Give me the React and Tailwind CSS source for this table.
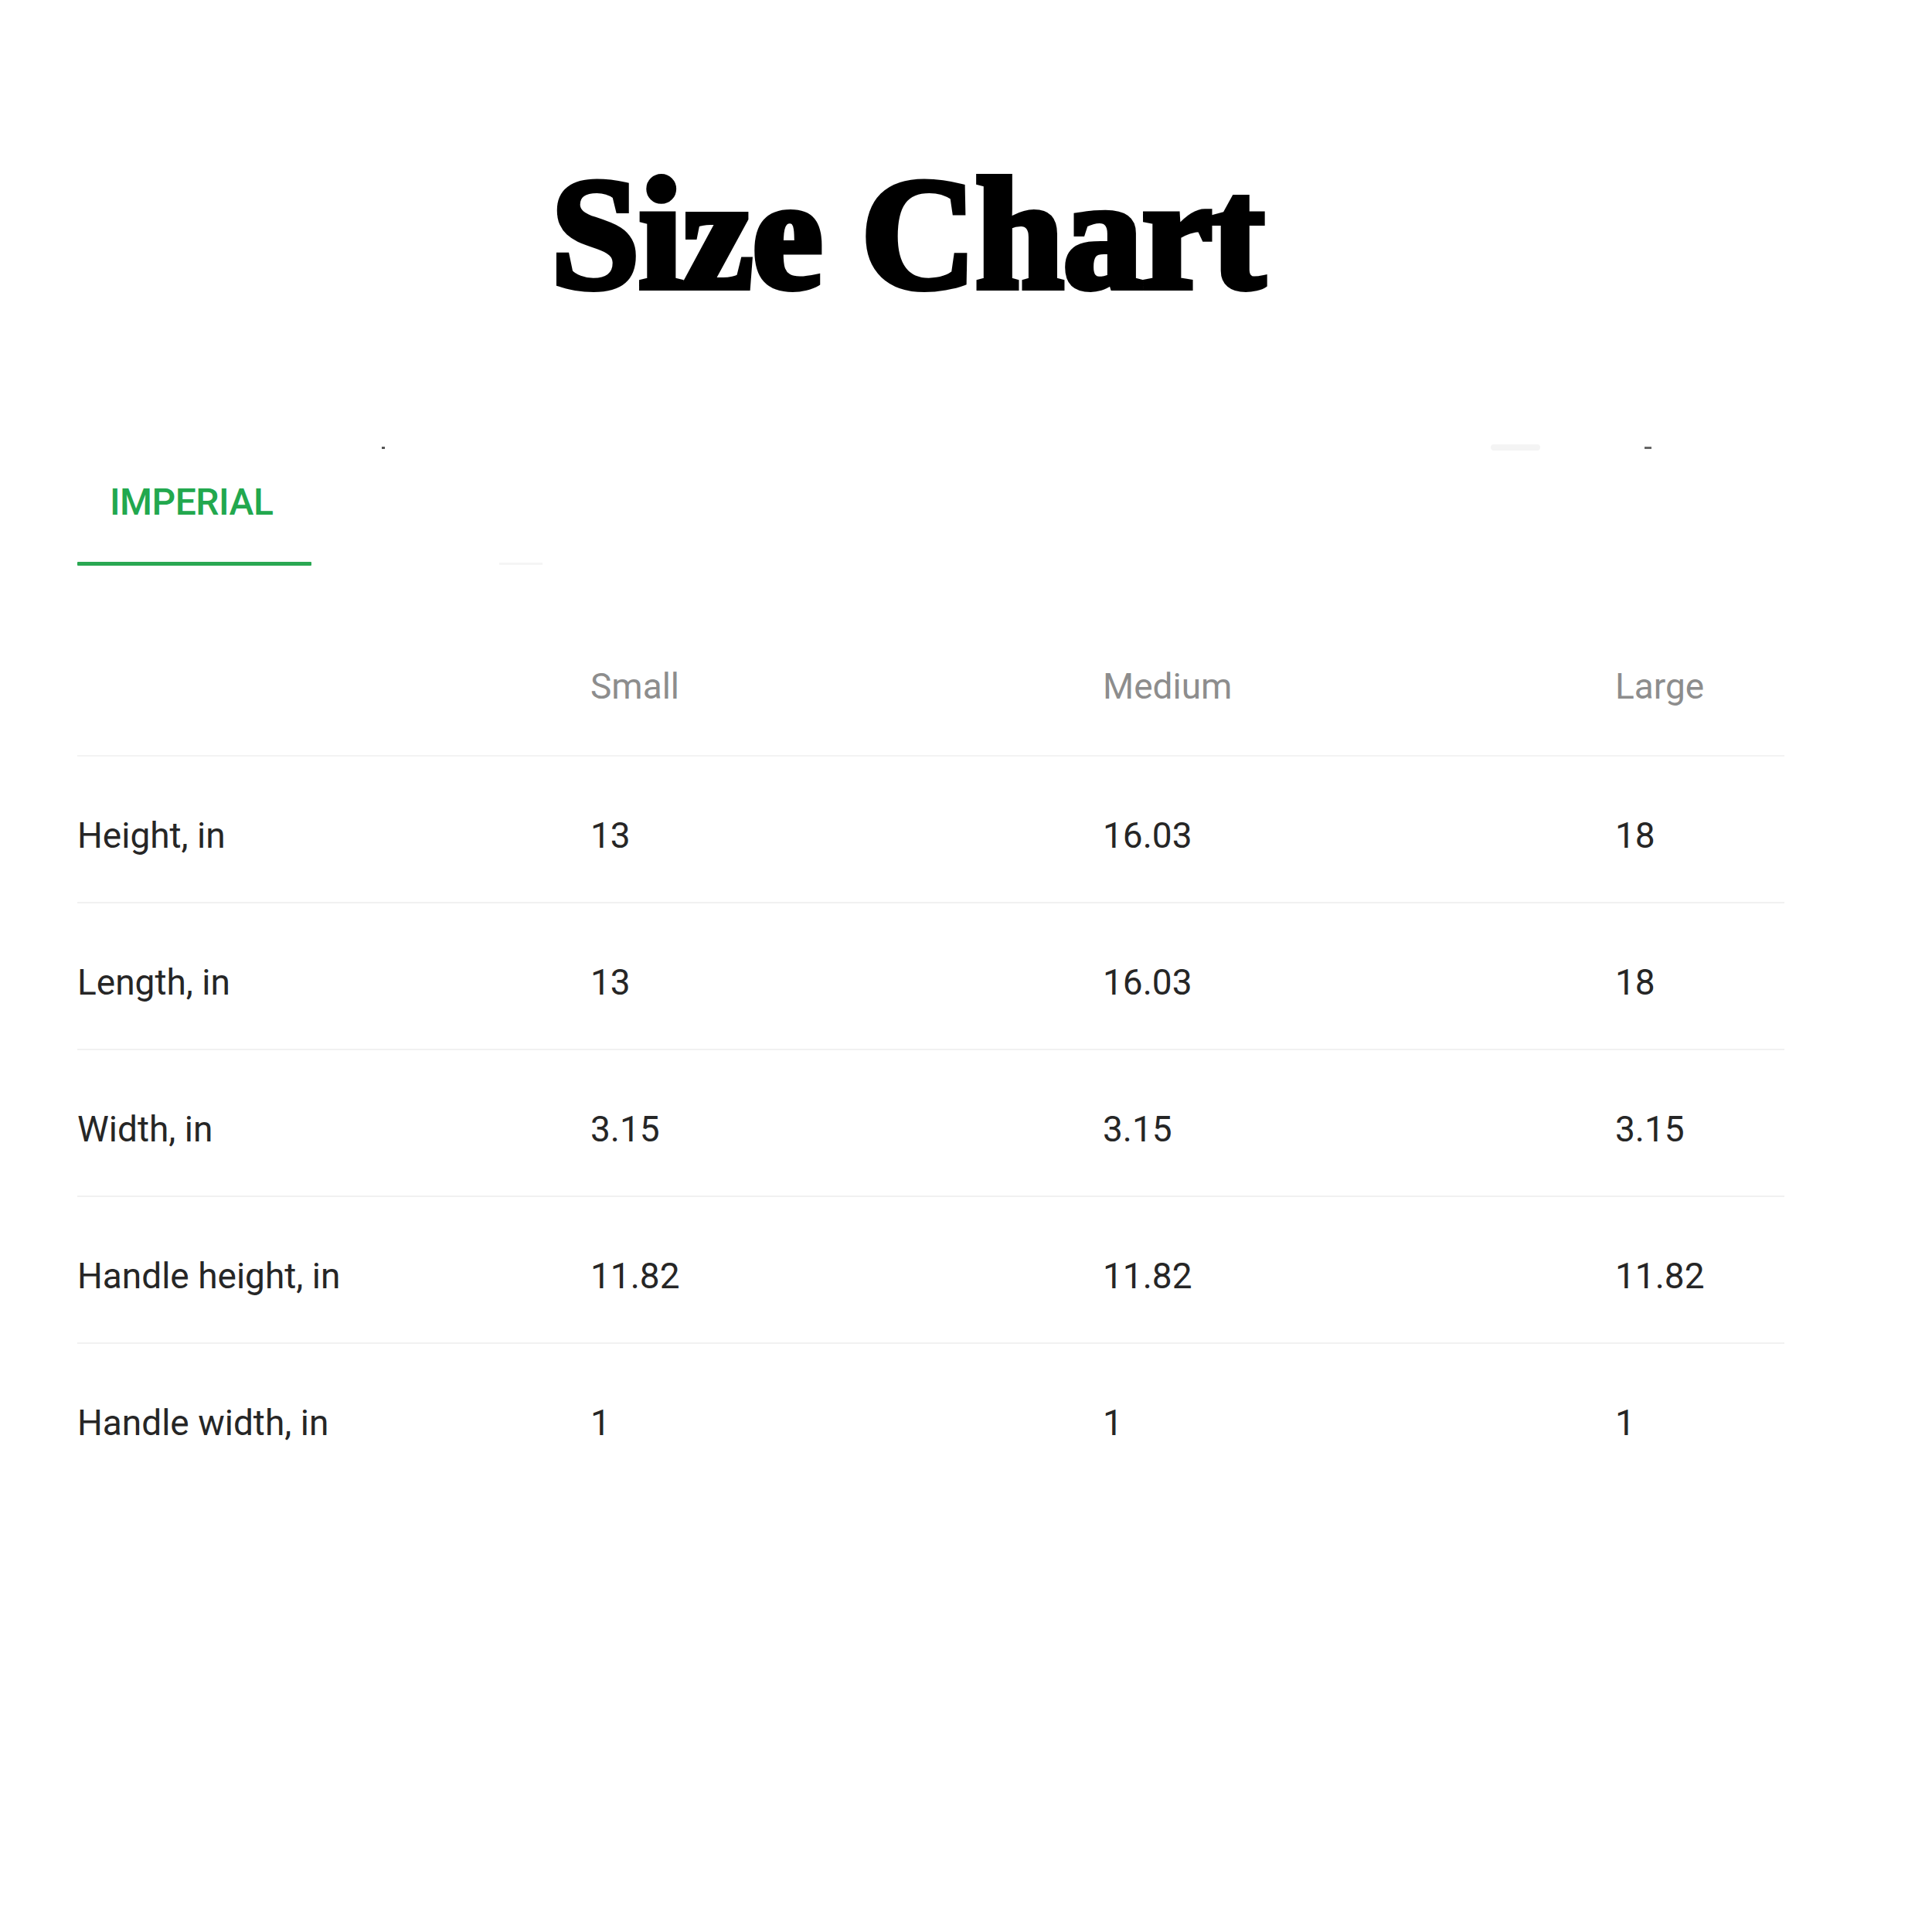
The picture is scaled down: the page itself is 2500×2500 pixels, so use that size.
import React from "react";

const rows = [
  ["Height, in", "13", "16.03", "18"],
  ["Length, in", "13", "16.03", "18"],
  ["Width, in", "3.15", "3.15", "3.15"],
  ["Handle height, in", "11.82", "11.82", "11.82"],
  ["Handle width, in", "1", "1", "1"],
];

export default function App() {
  return (
    <div className="w-[2500px] h-[2500px] bg-white overflow-hidden font-['Roboto',sans-serif]">
      <div className="pt-[200px] pl-[713px]">
        <h1 className="text-[206px] leading-none font-bold text-black font-['Liberation_Serif',serif] tracking-[-1px] [-webkit-text-stroke:8px_black] whitespace-nowrap">
          Size Chart
        </h1>
      </div>

      <div className="mt-[169px] h-[8px] flex items-center">
        <div className="ml-[494px] w-[4px] h-[3px] bg-[#555]" />
        <div className="ml-[1431px] w-[64px] h-[8px] rounded-full bg-[#f4f4f4]" />
        <div className="ml-[135px] w-[9px] h-[3px] bg-[#666]" />
      </div>

      <div className="mt-[43px] ml-[100px] w-[2209px]">
        <div className="pl-[42px] text-[48px] leading-none font-medium text-[#22a84e] tracking-[-0.5px]">
          IMPERIAL
        </div>
        <div className="mt-[53px] flex items-center">
          <div className="w-[303px] h-[5px] bg-[#2aa852] rounded-[1px]" />
          <div className="ml-[243px] w-[56px] h-[3px] bg-[#f5f5f5]" />
        </div>

        <div className="pt-[133px] pb-[66px] flex border-b-2 border-[#f3f3f3] text-[46px] leading-none text-[#8d8d8d]">
          <div className="w-[664px]" />
          <div className="w-[663px]">Small</div>
          <div className="w-[663px]">Medium</div>
          <div className="flex-1">Large</div>
        </div>

        {rows.map((r, i) => (
          <div
            key={i}
            className={
              "pt-[79px] pb-[63px] flex text-[46px] leading-none text-[#262626] " +
              (i < rows.length - 1 ? "border-b-2 border-[#f1f1f1]" : "")
            }
          >
            <div className="w-[664px]">{r[0]}</div>
            <div className="w-[663px]">{r[1]}</div>
            <div className="w-[663px]">{r[2]}</div>
            <div className="flex-1">{r[3]}</div>
          </div>
        ))}
      </div>
    </div>
  );
}
